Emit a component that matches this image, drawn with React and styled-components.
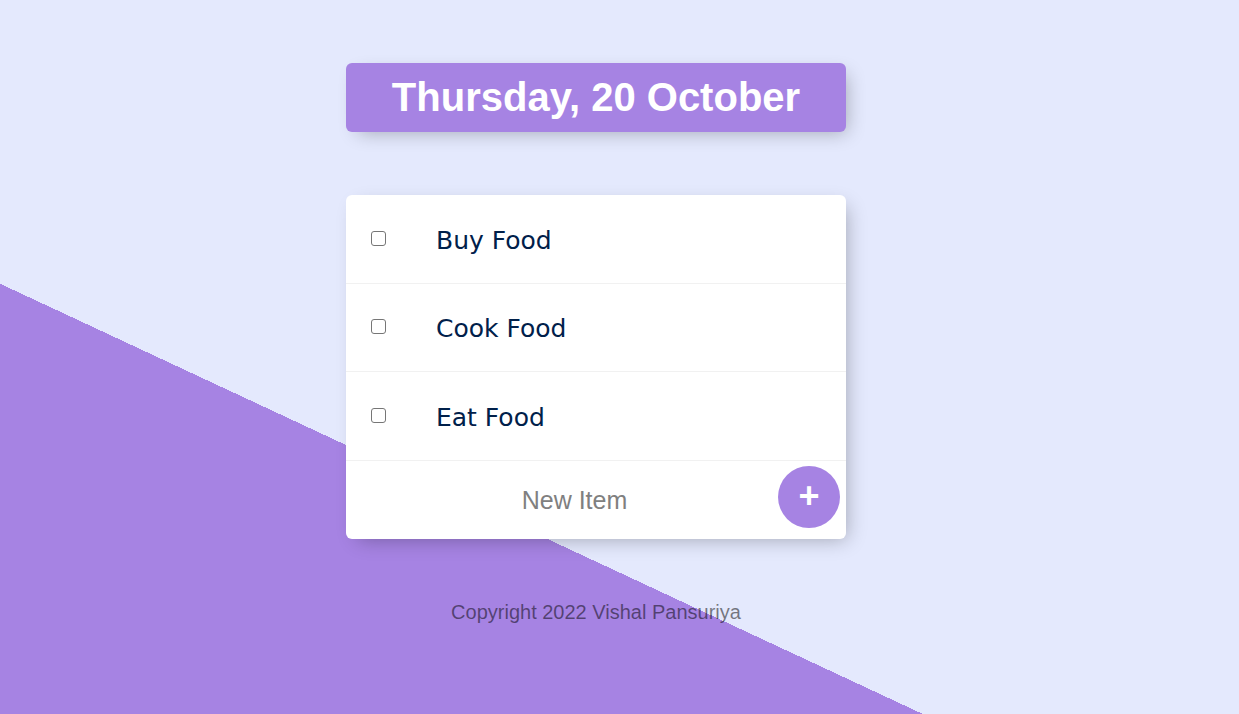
import React from "react";
import styled, { createGlobalStyle } from "styled-components";

const GlobalStyle = createGlobalStyle`
  html, body {
    margin: 0;
    padding: 0;
  }
  body {
    font-family: "Liberation Sans", Arial, sans-serif;
  }
`;

const Page = styled.div`
  min-height: 100vh;
  box-sizing: border-box;
  padding: 63px 47px 0 0;
  background-color: #e4e9fd;
  background-image: linear-gradient(25deg, #a683e3 390px, #e4e9fd 390px);
  overflow: hidden;
`;

const Column = styled.div`
  width: 500px;
  margin: 0 auto;
`;

const Heading = styled.div`
  height: 69px;
  display: flex;
  align-items: center;
  justify-content: center;
  background: #a683e3;
  border-radius: 6px;
  box-shadow: 6px 6px 19px -6px rgba(0, 0, 0, 0.3);
`;

const Title = styled.h1`
  margin: 0;
  color: #fff;
  font-size: 40px;
  font-weight: 700;
  font-family: "Liberation Sans", Arial, sans-serif;
`;

const Card = styled.div`
  margin-top: 63px;
  background: #fff;
  border-radius: 6px;
  box-shadow: 6px 6px 19px -6px rgba(0, 0, 0, 0.3);
  overflow: hidden;
`;

const Item = styled.div`
  height: 88.5px;
  box-sizing: border-box;
  display: flex;
  align-items: center;
  border-bottom: 1px solid #f1f1f1;
`;

const Check = styled.input`
  appearance: none;
  width: 15px;
  height: 15px;
  margin: 0 25px 1px 25px;
  box-sizing: border-box;
  border: 1px solid #767676;
  border-radius: 3px;
  background: #fff;
  cursor: pointer;
  flex-shrink: 0;
`;

const Label = styled.p`
  margin: 0;
  padding: 3px 25px 0;
  font-family: "DejaVu Sans", Verdana, sans-serif;
  font-size: 25px;
  color: #00204a;
`;

const Form = styled.form`
  height: 78px;
  box-sizing: border-box;
  display: flex;
  align-items: flex-start;
  padding: 5px 6px 0 25px;
`;

const TextInput = styled.input`
  flex: 1;
  min-width: 0;
  height: 70px;
  border: none;
  outline: none;
  padding: 0;
  text-align: center;
  font-family: "Liberation Sans", Arial, sans-serif;
  font-size: 25px;
  color: #00204a;
  background: transparent;

  &::placeholder {
    color: grey;
    opacity: 1;
  }
`;

const AddButton = styled.button`
  width: 62px;
  height: 62px;
  border-radius: 50%;
  border: 0;
  padding: 0 0 2px;
  background: #a683e3;
  color: #fff;
  font-family: "Liberation Sans", Arial, sans-serif;
  font-size: 36px;
  font-weight: 700;
  line-height: 1;
  cursor: pointer;
  flex-shrink: 0;
`;

const Footer = styled.footer`
  margin-top: 62px;
  text-align: center;
  font-size: 20px;
  color: rgba(0, 0, 0, 0.5);
`;

const items = ["Buy Food", "Cook Food", "Eat Food"];

const App = () => {
  return (
    <>
      <GlobalStyle />
      <Page>
        <Column>
          <Heading>
            <Title>Thursday, 20 October</Title>
          </Heading>

          <Card>
            {items.map((item) => (
              <Item key={item}>
                <Check type="checkbox" />
                <Label>{item}</Label>
              </Item>
            ))}
            <Form onSubmit={(e) => e.preventDefault()}>
              <TextInput type="text" placeholder="New Item" autoComplete="off" />
              <AddButton type="submit">+</AddButton>
            </Form>
          </Card>

          <Footer>Copyright 2022 Vishal Pansuriya</Footer>
        </Column>
      </Page>
    </>
  );
};

export default App;
